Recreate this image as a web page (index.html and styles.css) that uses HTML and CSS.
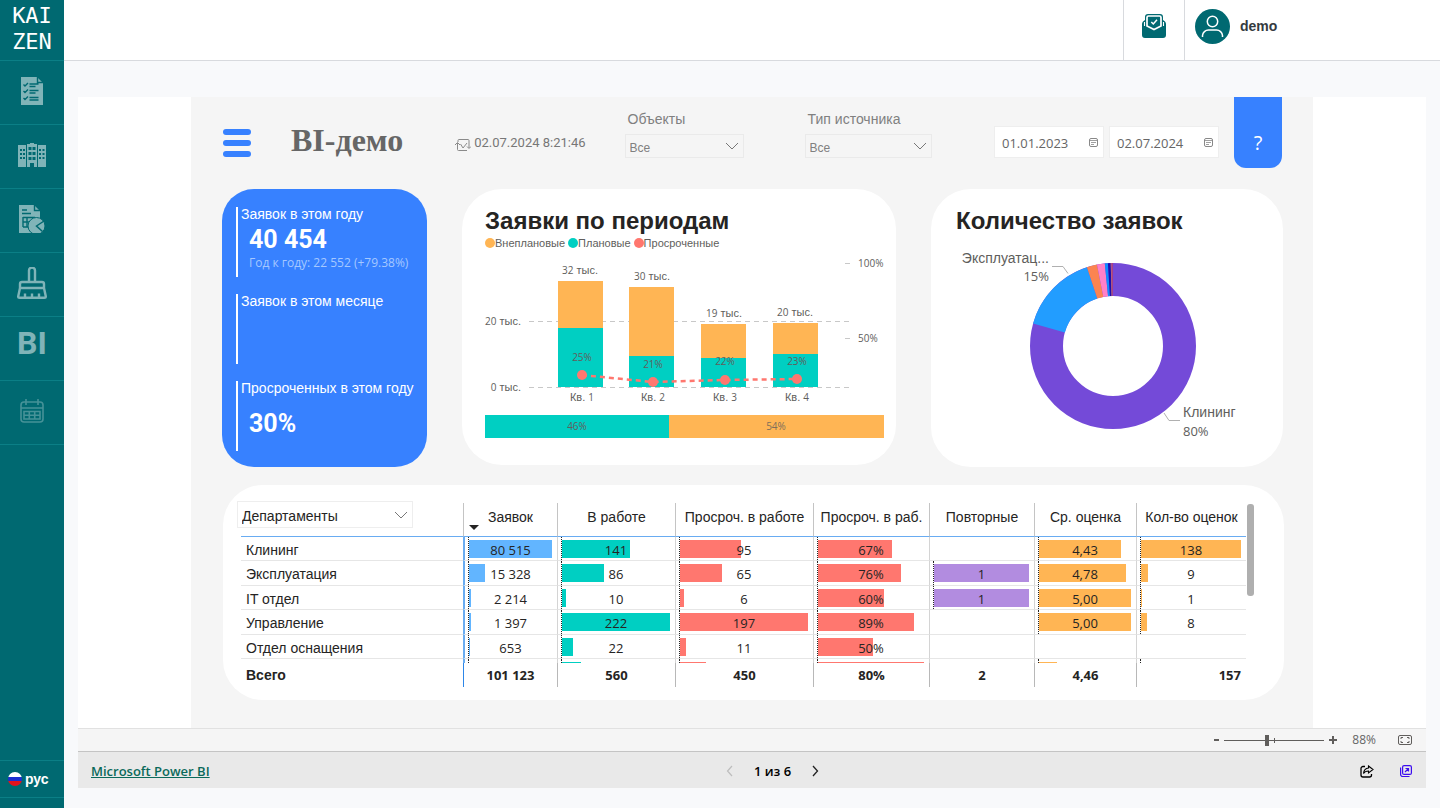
FILE: index.html
```html
<!DOCTYPE html>
<html lang="ru">
<head>
<meta charset="utf-8">
<title>BI-демо</title>
<link rel="stylesheet" href="styles.css">
</head>
<body>
<nav class="sidebar">
  <a class="logo" href="#"><span>KAI</span><span>ZEN</span></a>
  <a class="nav-item" href="#" aria-label="Заявки">
    <svg width="22" height="28" viewBox="0 0 22 28"><path fill="currentColor" d="M0 0h16l6 6v22H0z"/><g fill="none" stroke="#006971" stroke-width="1.4"><path d="M16.500 0v5.500h5.500M2.500 7.500l1.500 1.500 3-3M2.500 14l1.500 1.500 3-3M2.500 21l1.500 1.500 3-3M8.500 7h9M8.500 9.500h6M8.500 13.500h9M8.500 16h6M8.500 20.500h9M8.500 23h9"/></g></svg>
  </a>
  <a class="nav-item" href="#" aria-label="Объекты">
    <svg width="28" height="24" viewBox="0 0 28 24"><path fill="currentColor" d="M0 2h8v22H0zM9 1h3V0h4v1h3v23h-3v-4h-4v4H9zM20 2h8v22h-8z"/><path fill="#006971" d="M2 6h2v2H2zM2 10h2v2H2zM2 14h2v2H2zM5 6h2v2H5zM5 10h2v2H5zM5 14h2v2H5zM10.500 4h3v3h-3zM14.500 4h3v3h-3zM10.500 9h3v3h-3zM14.500 9h3v3h-3zM10.500 14h3v3h-3zM14.500 14h3v3h-3zM21 6h2v2h-2zM21 10h2v2h-2zM21 14h2v2h-2zM24.500 6h2v2h-2zM24.500 10h2v2h-2zM24.500 14h2v2h-2z"/></svg>
  </a>
  <a class="nav-item" href="#" aria-label="Отчёты">
    <svg width="26" height="28" viewBox="0 0 26 28"><path fill="currentColor" d="M0 0h15l6 6v22H0z"/><g fill="none" stroke="#006971" stroke-width="1.400"><path d="M15.500 0v5.500H21M3 5h5M3 8.500h9M4 12v10M8 12v10M4 12.500h12M4 17h8M4 22h6"/></g><circle cx="17.500" cy="21" r="8.500" fill="currentColor" stroke="#006971"/><path fill="none" stroke="#006971" stroke-width="1.500" d="M25 16l-7.500 5 6 5.500"/></svg>
  </a>
  <a class="nav-item" href="#" aria-label="Уборка">
    <svg width="30" height="32" viewBox="0 0 30 32" fill="none" stroke="currentColor" stroke-width="2.400"><path d="M12 15V3.500a3 3 0 0 1 6 0V15M5 15h20a2 2 0 0 1 2 2v4H3v-4a2 2 0 0 1 2-2zM3 21L1.200 29.500q0 1.300 1.500 1.300h24.600q1.500 0 1.500-1.300L27 21M8 31v-4.500M15 31v-4.500M22 31v-4.500"/></svg>
  </a>
  <a class="nav-item nav-bi" href="#">BI</a>
  <a class="nav-item dim" href="#" aria-label="Календарь">
    <svg width="24" height="24" viewBox="0 0 24 24" fill="none" stroke="currentColor" stroke-width="1.600"><rect x="1" y="3" width="22" height="20" rx="3"/><path d="M6 0v6M18 0v6M1 9h22M4 12.500h16v7.500H4zM4 16.300h16M9.300 12.500v7.500M14.700 12.500v7.500"/></svg>
  </a>
  <a class="lang" href="#"><svg width="14" height="14" viewBox="0 0 14 14"><clipPath id="flag"><circle cx="7" cy="7" r="7"/></clipPath><g clip-path="url(#flag)"><path fill="#fff" d="M0 0h14v5H0z"/><path fill="#1c2fd0" d="M0 5h14v4H0z"/><path fill="#e3121c" d="M0 9h14v5H0z"/></g></svg>рус</a>
</nav>

<div class="main">
  <header class="topbar">
    <button class="mail" aria-label="Сообщения">
      <svg width="24" height="24" viewBox="0 0 24 24"><path fill="#006971" d="M0 10q0-1.500 1-2.500L3 6V3a3 3 0 0 1 3-3h12a3 3 0 0 1 3 3v3l2 1.500q1 1 1 2.500v11a3 3 0 0 1-3 3H3a3 3 0 0 1-3-3z"/><path fill="none" stroke="#fff" stroke-width="1.700" d="M5 3.500q0-1.500 1.500-1.500h11q1.500 0 1.500 1.500v8.500l-7 3.500-7-3.500z"/><path fill="none" stroke="#fff" stroke-width="1.100" d="M2.500 8v4M21.500 8v4"/><path fill="none" stroke="#fff" stroke-width="1.500" d="M9.300 8l2 2L15 5.800"/></svg>
    </button>
    <a class="user" href="#">
      <svg width="35" height="35" viewBox="0 0 35 35"><circle cx="17.500" cy="17.500" r="17.500" fill="#006971"/><g fill="none" stroke="#fff" stroke-width="1.500"><circle cx="17.500" cy="12.500" r="5.200"/><path d="M7.500 28v-1.500a6 6 0 0 1 6-5.500h8a6 6 0 0 1 6 5.500V28"/></g></svg>
      <b>demo</b>
    </a>
  </header>

  <main class="content">
    <div class="stage">
      <section class="report">
        <div class="report-head">
          <button class="burger" aria-label="Меню"><i></i><i></i><i></i></button>
          <h1>BI-демо</h1>
          <div class="updated"><svg width="16" height="13" viewBox="0 0 16 13" fill="none" stroke="#8a8a8a" stroke-width="1"><path d="M3 3V1.500q0-1 1-1h9q1 0 1 1V9M12 7.500l2 2 2-2M12 11.500H3.500q-1 0-1-1V4M0 6l2.500-2.500L5 6M5.500 5l2.500 4 4-5"/></svg><time>02.07.2024 8:21:46</time></div>
          <div class="slicer objects"><label for="obj">Объекты</label><select id="obj"><option>Все</option></select></div>
          <div class="slicer source"><label for="src">Тип источника</label><select id="src"><option>Все</option></select></div>
          <div class="dates">
            <label class="date"><input aria-label="Начало" value="01.01.2023"><svg width="9" height="9" viewBox="0 0 9 9" fill="none" stroke="#888"><rect x=".5" y=".5" width="8" height="8" rx="1.500"/><path d="M.500 2.500h8M2 4.500h5M2 6.500h3" stroke-width=".8"/></svg></label>
            <label class="date"><input aria-label="Конец" value="02.07.2024"><svg width="9" height="9" viewBox="0 0 9 9" fill="none" stroke="#888"><rect x=".5" y=".5" width="8" height="8" rx="1.500"/><path d="M.500 2.500h8M2 4.500h5M2 6.500h3" stroke-width=".8"/></svg></label>
          </div>
          <button class="help">?</button>
        </div>

        <div class="cards">
          <div class="kpis">
            <div class="kpi"><h3>Заявок в этом году</h3><strong>40 454</strong><small>Год к году: 22 552 (+79.38%)</small></div>
            <div class="kpi"><h3>Заявок в этом месяце</h3></div>
            <div class="kpi single"><h3>Просроченных в этом году</h3><strong>30%</strong></div>
          </div>

          <div class="card periods">
            <h2>Заявки по периодам</h2>
            <ul class="legend"><li class="lg-orange">Внеплановые</li><li class="lg-teal">Плановые</li><li class="lg-red">Просроченные</li></ul>
            <svg class="chart" viewBox="0 0 400 184">
              <path class="grid" d="M44 66.500h320M44 132.500h320"/>
              <path class="tick" d="M360 8.500h5M360 83.500h5"/>
              <g class="orange"><path d="M73 26h45v47H73zM144 32h45v69h-45zM216 69h45v34h-45zM288 68h45v31h-45zM184 160h215v23H184z"/></g>
              <g class="teal"><path d="M73 73h45v59H73zM144 101h45v31h-45zM216 103h45v29h-45zM288 99h45v33h-45zM0 160h184v23H0z"/></g>
              <path class="trend" d="M97 120L168 127 240 125 312 124"/>
              <g class="red"><circle cx="97" cy="120" r="5"/><circle cx="168" cy="127" r="5"/><circle cx="240" cy="125" r="5"/><circle cx="312" cy="124" r="5"/></g>
              <g class="lbl end"><text x="36" y="70"><tspan>20</tspan> тыс.</text><text x="36" y="136"><tspan>0</tspan> тыс.</text></g>
              <g class="lbl mid"><text x="95" y="19"><tspan>32</tspan> тыс.</text><text x="167" y="25"><tspan>30</tspan> тыс.</text><text x="239" y="62"><tspan>19</tspan> тыс.</text><text x="310" y="61"><tspan>20</tspan> тыс.</text>
              <text x="97" y="146">Кв. <tspan>1</tspan></text><text x="168" y="146">Кв. <tspan>2</tspan></text><text x="240" y="146">Кв. <tspan>3</tspan></text><text x="312" y="146">Кв. <tspan>4</tspan></text></g>
              <g class="lbl pct mid"><text x="97" y="106">25%</text><text x="168" y="113">21%</text><text x="240" y="110">22%</text><text x="312" y="110">23%</text><text x="92" y="175">46%</text><text x="291" y="175" opacity=".8">54%</text></g>
              <g class="lbl pct"><text x="373" y="12">100%</text><text x="373" y="87">50%</text></g>
            </svg>
          </div>

          <div class="card total">
            <h2>Количество заявок</h2>
            <svg class="chart" viewBox="0 0 302 200">
              <g class="donut" transform="rotate(-90 157 96)">
                <circle cx="157" cy="96" r="66.500" pathLength="100" stroke="#744ad8"/>
                <circle cx="157" cy="96" r="66.500" pathLength="100" stroke="#229dff" stroke-dasharray="15.500 84.500" stroke-dashoffset="-79.400"/>
                <circle cx="157" cy="96" r="66.500" pathLength="100" stroke="#fb8450" stroke-dasharray="2 98" stroke-dashoffset="-94.900"/>
                <circle cx="157" cy="96" r="66.500" pathLength="100" stroke="#ff80c8" stroke-dasharray="1.500 98.500" stroke-dashoffset="-96.900"/>
                <circle cx="157" cy="96" r="66.500" pathLength="100" stroke="#118dff" stroke-dasharray=".6 99.400" stroke-dashoffset="-98.400"/>
                <circle cx="157" cy="96" r="66.500" pathLength="100" stroke="#1d0db0" stroke-dasharray=".55 99.450" stroke-dashoffset="-99"/>
                <circle cx="157" cy="96" r="66.500" pathLength="100" stroke="#e07a50" stroke-dasharray=".15 99.850" stroke-dashoffset="-99.550"/>
                <circle cx="157" cy="96" r="66.500" pathLength="100" stroke="#a83f8a" stroke-dasharray=".3 99.700" stroke-dashoffset="-99.700"/>
              </g>
              <path class="leader" d="M96 16.500h11l5 7M208 163l5 7.500h11"/>
              <g class="dlbl end"><text x="93" y="13">Эксплуатац...</text><text class="num" x="93" y="31">15%</text></g>
              <g class="dlbl"><text x="227" y="167">Клининг</text><text class="num" x="227" y="186">80%</text></g>
            </svg>
          </div>
        </div>

        <div class="card table-card">
          <table>
            <colgroup><col class="c0"><col class="c1"><col class="c2"><col class="c3"><col class="c4"><col class="c5"><col class="c6"><col class="c7"></colgroup>
            <thead><tr>
              <th><select class="dep" aria-label="Группировка"><option>Департаменты</option></select></th>
              <th class="sorted">Заявок</th><th>В работе</th><th>Просроч. в работе</th><th>Просроч. в раб.</th><th>Повторные</th><th>Ср. оценка</th><th>Кол-во оценок</th>
            </tr></thead>
            <tbody>
              <tr><td>Клининг</td>
                <td><div class="cell blue"><i style="width:100%"></i><span>80 515</span></div></td>
                <td><div class="cell teal"><i style="width:63%"></i><span>141</span></div></td>
                <td><div class="cell red"><i style="width:48%"></i><span>95</span></div></td>
                <td><div class="cell red"><i style="width:70%"></i><span>67%</span></div></td>
                <td></td>
                <td><div class="cell orange"><i style="width:89%"></i><span>4,43</span></div></td>
                <td><div class="cell orange"><i style="width:100%"></i><span>138</span></div></td></tr>
              <tr><td>Эксплуатация</td>
                <td><div class="cell blue"><i style="width:19%"></i><span>15 328</span></div></td>
                <td><div class="cell teal"><i style="width:39%"></i><span>86</span></div></td>
                <td><div class="cell red"><i style="width:33%"></i><span>65</span></div></td>
                <td><div class="cell red"><i style="width:78%"></i><span>76%</span></div></td>
                <td><div class="cell violet"><i style="width:100%"></i><span>1</span></div></td>
                <td><div class="cell orange"><i style="width:95%"></i><span>4,78</span></div></td>
                <td><div class="cell orange"><i style="width:7%"></i><span>9</span></div></td></tr>
              <tr><td>IT отдел</td>
                <td><div class="cell blue"><i style="width:3%"></i><span>2 214</span></div></td>
                <td><div class="cell teal"><i style="width:4%"></i><span>10</span></div></td>
                <td><div class="cell red"><i style="width:3%"></i><span>6</span></div></td>
                <td><div class="cell red"><i style="width:62%"></i><span>60%</span></div></td>
                <td><div class="cell violet"><i style="width:100%"></i><span>1</span></div></td>
                <td><div class="cell orange"><i style="width:100%"></i><span>5,00</span></div></td>
                <td><div class="cell orange"><i style="width:1%"></i><span>1</span></div></td></tr>
              <tr><td>Управление</td>
                <td><div class="cell blue"><i style="width:2%"></i><span>1 397</span></div></td>
                <td><div class="cell teal"><i style="width:100%"></i><span>222</span></div></td>
                <td><div class="cell red"><i style="width:100%"></i><span>197</span></div></td>
                <td><div class="cell red"><i style="width:91%"></i><span>89%</span></div></td>
                <td></td>
                <td><div class="cell orange"><i style="width:100%"></i><span>5,00</span></div></td>
                <td><div class="cell orange"><i style="width:6%"></i><span>8</span></div></td></tr>
              <tr><td>Отдел оснащения</td>
                <td><div class="cell blue"><i style="width:1%"></i><span>653</span></div></td>
                <td><div class="cell teal"><i style="width:10%"></i><span>22</span></div></td>
                <td><div class="cell red"><i style="width:5%"></i><span>11</span></div></td>
                <td><div class="cell red"><i style="width:52%"></i><span>50%</span></div></td>
                <td></td><td></td><td></td></tr>
              <tr class="cut"><td></td>
                <td><div class="cell blue"></div></td>
                <td><div class="cell teal"><i style="width:18%"></i></div></td>
                <td><div class="cell red"><i style="width:20%"></i></div></td>
                <td><div class="cell red"><i style="width:100%"></i></div></td>
                <td></td>
                <td><div class="cell orange"><i style="width:20%"></i></div></td>
                <td><div class="cell orange"></div></td></tr>
            </tbody>
            <tfoot><tr><th>Всего</th><td>101 123</td><td>560</td><td>450</td><td>80%</td><td>2</td><td>4,46</td><td class="last">157</td></tr></tfoot>
          </table>
          <div class="scroll"></div>
        </div>
      </section>
    </div>

    <div class="zoombar">
      <button aria-label="Уменьшить"><svg width="6" height="10" viewBox="0 0 6 10"><path stroke="#605e5c" stroke-width="2" d="M0 5h5"/></svg></button>
      <input type="range" min="0" max="100" value="42" aria-label="Масштаб">
      <button aria-label="Увеличить"><svg width="10" height="10" viewBox="0 0 10 10"><path stroke="#605e5c" stroke-width="2" d="M1 5h8M5 1v8"/></svg></button>
      <span class="zoom-value">88%</span>
      <button aria-label="По размеру страницы"><svg width="14" height="10" viewBox="0 0 14 10" fill="none" stroke="#605e5c"><rect x=".5" y=".5" width="13" height="9" rx="1.500"/><path d="M3 4V2.500h2M9 2.500h2V4M11 6v1.500H9M5 7.500H3V6"/></svg></button>
    </div>
    <footer class="statusbar">
      <a class="brand" href="#">Microsoft Power BI</a>
      <div class="pager">
        <button aria-label="Предыдущая"><svg width="8" height="12" viewBox="0 0 8 12" fill="none" stroke="#bdbdbd" stroke-width="1.200"><path d="M6 1L1.500 6 6 11"/></svg></button>
        <span>1 из 6</span>
        <button aria-label="Следующая"><svg width="8" height="12" viewBox="0 0 8 12" fill="none" stroke="#222" stroke-width="1.300"><path d="M2 1l4.500 5L2 11"/></svg></button>
      </div>
      <div class="actions">
        <button aria-label="Поделиться"><svg width="14" height="13" viewBox="0 0 14 13" fill="none" stroke="#000" stroke-width="1.300"><path d="M5 1.500H3a2 2 0 0 0-2 2V10a2 2 0 0 0 2 2h6.500a2 2 0 0 0 2-2V9"/><path d="M8.500 1l4.500 3.500-4.500 3.500V6Q5 6 3.500 8.500 4 3.500 8.500 3z" stroke-width="1.100"/></svg></button>
        <button aria-label="Открыть в новом окне"><svg width="12" height="12" viewBox="0 0 12 12" fill="none" stroke="#3d0ef0" stroke-width="1.200"><rect x="2.600" y=".6" width="8.800" height="8.800" rx="1.500"/><path d="M.600 2.500V9.500a2 2 0 0 0 2 2H9.500M5 7l3.500-3.500M5.500 3.500h3v3"/></svg></button>
      </div>
    </footer>
  </main>
</div>
</body>
</html>
```

FILE: styles.css
```css
* { box-sizing: border-box; }
body { margin: 0; min-height: 100vh; display: flex; background: #f8f9fb; font-family: "Liberation Sans", Arial, sans-serif; font-size: 14px; color: #252423; }
button { border: 0; background: none; padding: 0; font: inherit; display: flex; align-items: center; cursor: pointer; }
a { color: inherit; text-decoration: none; }
h1, h2, h3, ul { margin: 0; padding: 0; font-weight: normal; }
svg { display: block; }

/* Sidebar */
.sidebar { flex: 0 0 64px; background: #006971; display: flex; flex-direction: column; }
.logo { height: 60px; padding-top: 3px; display: flex; flex-direction: column; align-items: center; color: #fff; font: 22px/26px "DejaVu Sans Mono", "Liberation Mono", monospace; }
.nav-item { height: 64px; border-top: 1px solid #0b7f86; display: flex; align-items: center; justify-content: center; color: #80b4b8; padding-bottom: 4px; }
.nav-item.dim { color: #469298; border-bottom: 1px solid #0b7f86; height: 65px; }
.nav-bi { font: bold 32px/40px Roboto, sans-serif; padding-bottom: 12px; }
.lang { margin-top: auto; margin-bottom: 10px; height: 38px; border-top: 1px solid #0b7f86; border-bottom: 1px solid #0b7f86; display: flex; align-items: center; gap: 3px; padding-left: 8px; color: #fff; font-weight: bold; }

/* Top bar */
.main { flex: 1; min-width: 0; display: flex; flex-direction: column; }
.topbar { height: 61px; background: #fff; border-bottom: 1px solid #d8dade; display: flex; justify-content: flex-end; }
.mail { width: 61px; border-left: 1px solid #d8dade; justify-content: center; padding-bottom: 8px; }
.user { width: 256px; border-left: 1px solid #d8dade; display: flex; align-items: center; gap: 10px; padding: 0 0 8px 10px; color: #343a40; }

/* Report frame */
.content { flex: 1; padding: 36px 14px 20px; display: flex; flex-direction: column; }
.stage { flex: 1; background: #fff; display: flex; justify-content: center; }
.report { width: 100%; max-width: 1122px; background: #f5f5f5; padding: 0 30px 28px 31px; }
.report-head { height: 92px; display: flex; align-items: flex-start; }
.burger { flex-direction: column; gap: 5px; margin: 32px 0 0 1px; }
.burger i { width: 28px; height: 6px; border-radius: 3px; background: #3781ff; }
h1 { font: bold 32px/36px "Liberation Serif", "Times New Roman", serif; color: #666; margin: 25px 0 0 40px; white-space: nowrap; }
.updated { display: flex; align-items: center; gap: 3px; margin: 36px 0 0 52px; font: 13px/20px Roboto, sans-serif; color: #777; white-space: nowrap; }
.updated svg { margin-top: 4px; }
.slicer { margin-top: 13px; color: #808080; }
.slicer label { display: block; line-height: 18px; padding-left: 3px; margin-bottom: 6px; white-space: nowrap; }
.slicer.objects { width: 119px; margin-left: 39px; }
.slicer.source { width: 127px; margin-left: 61px; }
select { appearance: none; font: inherit; color: inherit; border: 1px solid #eaeaea; border-radius: 0; background: transparent url("data:image/svg+xml,%3Csvg xmlns='http://www.w3.org/2000/svg' width='14' height='8' fill='none' stroke='%23777'%3E%3Cpath d='M1 1l6 6L13 1'/%3E%3C/svg%3E") no-repeat right 4px center; }
.slicer select { display: block; width: 100%; height: 24px; padding: 3px 4px 0; font-size: 12px; }
.dates { display: flex; gap: 5px; margin: 29px 15px 0 auto; }
.date { width: 110px; height: 32px; background: #fff; border: 1px solid #eee; display: flex; align-items: center; padding: 1px 5px 0 7px; }
.date input { flex: 1; min-width: 0; border: 0; padding: 0; font: 13px/20px "Open Sans", sans-serif; color: #666; background: none; }
.help { width: 48px; height: 71px; margin-right: 1px; background: #3781ff; color: #fff; border-radius: 0 0 12px 12px; justify-content: center; padding-top: 20px; font: 20px/24px "Open Sans", sans-serif; }

.cards { display: grid; grid-template-columns: 205fr 434fr 352fr; gap: 35px; align-items: start; }
.kpis { background: #3781ff; border-radius: 32px; color: #fff; padding: 18px 8px 16px 14px; display: flex; flex-direction: column; gap: 17px; }
.kpi { height: 70px; border-left: 2px solid #fff; padding-left: 3px; display: flex; flex-direction: column; }
.kpi h3 { font-size: 14px; line-height: 14px; white-space: nowrap; }
.kpi strong { font: bold 25px/34px Roboto, sans-serif; padding: 2px 0 0 8px; }
.kpi small { font: 12px/12px "Open Sans", sans-serif; padding-left: 8px; color: #a5c8ff; white-space: nowrap; }
.kpi.single strong { padding-top: 12px; }

.card { background: #fff; border-radius: 40px; }
.card h2 { font-size: 24px; line-height: 28px; font-weight: bold; white-space: nowrap; }
.periods { padding: 18px 11px 26px 23px; }
.total { padding: 18px 25px 17px; }
.total h2 { margin-bottom: 15px; }
.legend { display: flex; gap: 3px; list-style: none; font-size: 11px; line-height: 16px; color: #605e5c; margin-bottom: 4px; }
.legend li { display: flex; align-items: center; }
.legend li::before { content: ""; width: 10px; height: 10px; border-radius: 5px; background: currentColor; }
.legend .lg-orange::before { background: #ffb554; }
.legend .lg-teal::before { background: #00cfc2; }
.legend .lg-red::before { background: #ff776f; }
.chart { width: 100%; height: auto; overflow: visible; }
.grid { stroke: #c8c8c8; stroke-dasharray: 5 4; fill: none; }
.tick { stroke: #c8c8c8; }
.chart .orange { fill: #ffb554; }
.chart .teal { fill: #00cfc2; }
.chart .red { fill: #ff776f; }
.trend { fill: none; stroke: #ff776f; stroke-width: 2.5; stroke-dasharray: 5 4; }
.lbl { font-size: 11px; fill: #605e5c; }
.lbl tspan, .pct { font-family: "Open Sans", sans-serif; font-size: 10px; }
.mid { text-anchor: middle; }
.end { text-anchor: end; }
.donut { fill: none; stroke-width: 33; }
.leader { fill: none; stroke: #b0b0b0; }
.dlbl { font-size: 14px; fill: #605e5c; }
.dlbl .num { font-family: "Open Sans", sans-serif; font-size: 13px; }

/* Departments table */
.table-card { margin: 18px -1px 0 1px; padding: 18px 30px 13px 18px; display: flex; align-items: flex-start; }
table { flex: 1; border-collapse: separate; border-spacing: 0; table-layout: fixed; width: 100%; }
.c0 { width: 222px; } .c1 { width: 94px; } .c2 { width: 118px; } .c3 { width: 138px; }
.c4 { width: 116px; } .c5 { width: 105px; } .c6 { width: 102px; } .c7 { width: 110px; }
th, td { padding: 0; text-align: center; white-space: nowrap; border-left: 1px solid #c4c4c4; }
th:first-child, td:first-child { border-left: 0; text-align: left; }
thead th { height: 34px; font-weight: normal; border-bottom: 1px solid #69acf2; padding-bottom: 6px; }
.sorted::after { content: ""; display: block; width: 0; margin: 0 0 -5px 5px; border: 5px solid transparent; border-top-color: #252423; border-bottom: 0; }
.dep { display: block; width: 176px; height: 27px; margin: -4px 0 0 -4px; padding: 2px 4px 0; border-color: #eee; }
tbody td { height: 24px; border-bottom: 1px solid #e6e6e6; border-left-color: #d4d4d4; }
tbody tr:nth-child(even) td { height: 25px; }
tbody td:first-child { padding: 2px 0 0 5px; }
tbody td:nth-child(2) { border-left: 2px solid #69acf2; }
.cell { height: 100%; margin: 0 5px 0 3px; border-left: 1px dotted #252423; display: grid; align-items: center; font: 13px/18px "Open Sans", sans-serif; }
.cell i, .cell span { grid-area: 1 / 1; }
.cell i { height: 18px; }
.cell span { padding-top: 2px; }
.blue i { background: #62b5ff; }
.teal i { background: #00cfc2; }
.red i { background: #ff776f; }
.violet i { background: #b28ce0; }
.orange i { background: #ffb554; }
tbody tr.cut td { height: 4px; border-bottom: 0; padding: 0; }
.cut .cell { height: 4px; align-items: end; }
.cut .cell i { height: 1px; }
tfoot th, tfoot td { height: 24px; font: bold 13px/18px "Open Sans", sans-serif; border-left-color: #b8b8b8; }
tfoot th { font: bold 14px/18px "Liberation Sans", Arial, sans-serif; padding-left: 5px; }
tfoot td:nth-child(2) { border-left-color: #2d86e8; }
tfoot .last { text-align: right; padding-right: 5px; }
.scroll { flex: 0 0 7px; height: 92px; margin: 1px 0 0 1px; border-radius: 3px; background: #afafaf; }

/* Bottom bars */
.zoombar { height: 23px; background: #f5f5f5; border-top: 1px solid #e1e1e1; display: flex; align-items: center; justify-content: flex-end; gap: 4px; padding-right: 14px; }
.zoombar input { appearance: none; width: 100px; height: 12px; margin: 0; background: linear-gradient(#605e5c, #605e5c) no-repeat center / 100% 1px, linear-gradient(#605e5c, #605e5c) no-repeat center / 1px 5px; }
.zoombar input::-webkit-slider-thumb { appearance: none; width: 4px; height: 11px; background: #605e5c; }
.zoom-value { font: 12px/20px "Open Sans", sans-serif; color: #666; margin: 0 18px 0 10px; }
.statusbar { height: 37px; background: #e9e9e9; border-top: 1px solid #c4c4c4; display: grid; grid-template-columns: 1fr auto 1fr; align-items: center; padding: 2px 14px 0 13px; font: 600 13px/20px "Open Sans", sans-serif; }
.brand { color: #0b6a5b; text-decoration: underline; justify-self: start; }
.pager { display: flex; align-items: center; gap: 20px; margin-left: 42px; color: #000; }
.actions { display: flex; gap: 26px; justify-self: end; }
```
